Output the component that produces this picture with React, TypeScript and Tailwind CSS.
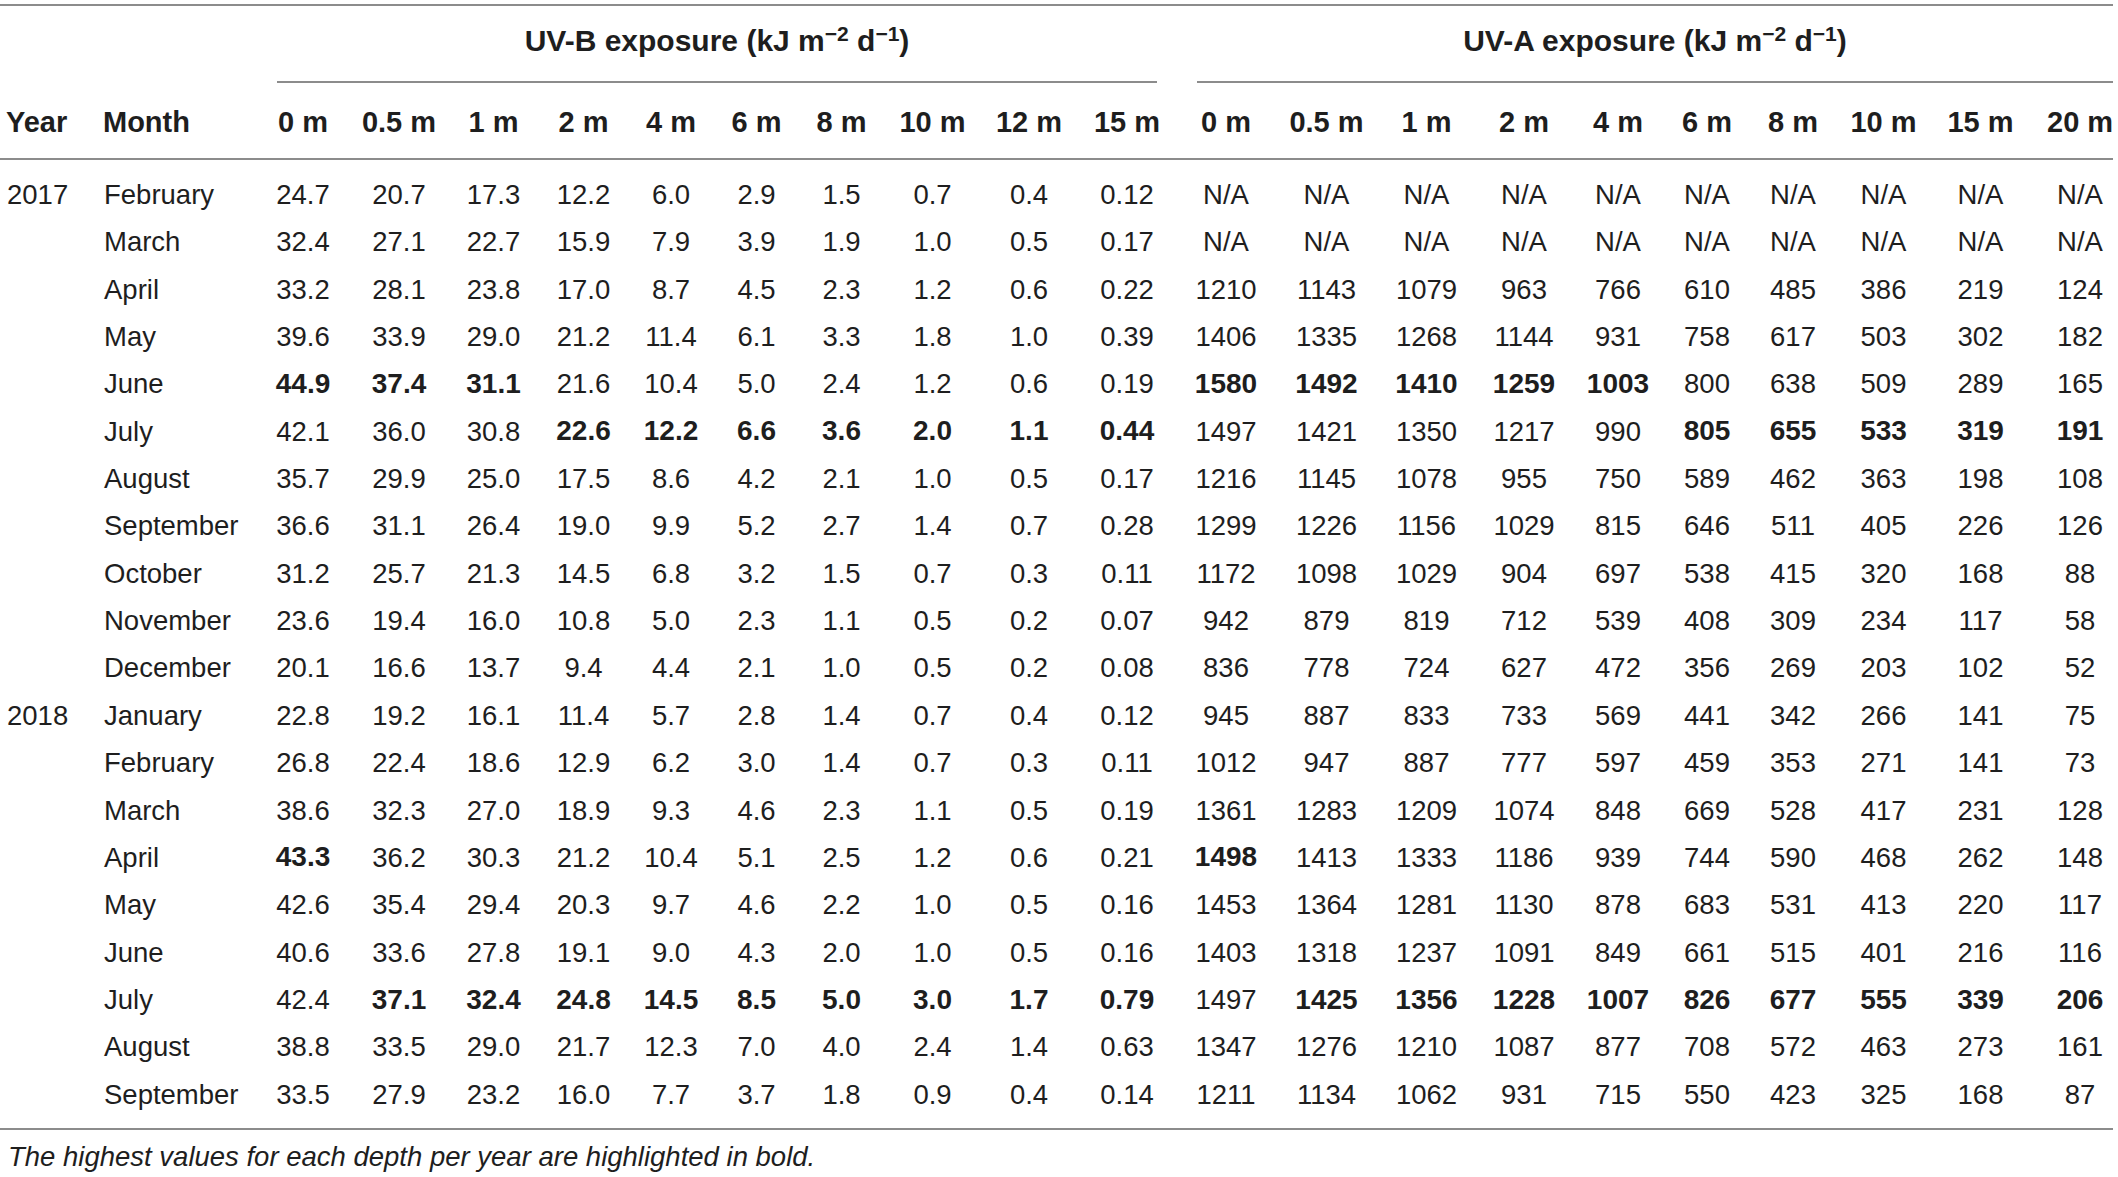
import React from "react";

const GRID =
  "grid grid-cols-[95px_160px_96px_96px_93px_87px_88px_83px_87px_95px_98px_98px_100px_101px_99px_96px_92px_86px_86px_95px_99px_83px]";

const depthsB = ["0 m", "0.5 m", "1 m", "2 m", "4 m", "6 m", "8 m", "10 m", "12 m", "15 m"];
const depthsA = ["0 m", "0.5 m", "1 m", "2 m", "4 m", "6 m", "8 m", "10 m", "15 m", "20 m"];

type Row = { year: string; month: string; v: string };

const rows: Row[] = [
  { year: "2017", month: "February", v: "24.7 20.7 17.3 12.2 6.0 2.9 1.5 0.7 0.4 0.12 N/A N/A N/A N/A N/A N/A N/A N/A N/A N/A" },
  { year: "", month: "March", v: "32.4 27.1 22.7 15.9 7.9 3.9 1.9 1.0 0.5 0.17 N/A N/A N/A N/A N/A N/A N/A N/A N/A N/A" },
  { year: "", month: "April", v: "33.2 28.1 23.8 17.0 8.7 4.5 2.3 1.2 0.6 0.22 1210 1143 1079 963 766 610 485 386 219 124" },
  { year: "", month: "May", v: "39.6 33.9 29.0 21.2 11.4 6.1 3.3 1.8 1.0 0.39 1406 1335 1268 1144 931 758 617 503 302 182" },
  { year: "", month: "June", v: "*44.9 *37.4 *31.1 21.6 10.4 5.0 2.4 1.2 0.6 0.19 *1580 *1492 *1410 *1259 *1003 800 638 509 289 165" },
  { year: "", month: "July", v: "42.1 36.0 30.8 *22.6 *12.2 *6.6 *3.6 *2.0 *1.1 *0.44 1497 1421 1350 1217 990 *805 *655 *533 *319 *191" },
  { year: "", month: "August", v: "35.7 29.9 25.0 17.5 8.6 4.2 2.1 1.0 0.5 0.17 1216 1145 1078 955 750 589 462 363 198 108" },
  { year: "", month: "September", v: "36.6 31.1 26.4 19.0 9.9 5.2 2.7 1.4 0.7 0.28 1299 1226 1156 1029 815 646 511 405 226 126" },
  { year: "", month: "October", v: "31.2 25.7 21.3 14.5 6.8 3.2 1.5 0.7 0.3 0.11 1172 1098 1029 904 697 538 415 320 168 88" },
  { year: "", month: "November", v: "23.6 19.4 16.0 10.8 5.0 2.3 1.1 0.5 0.2 0.07 942 879 819 712 539 408 309 234 117 58" },
  { year: "", month: "December", v: "20.1 16.6 13.7 9.4 4.4 2.1 1.0 0.5 0.2 0.08 836 778 724 627 472 356 269 203 102 52" },
  { year: "2018", month: "January", v: "22.8 19.2 16.1 11.4 5.7 2.8 1.4 0.7 0.4 0.12 945 887 833 733 569 441 342 266 141 75" },
  { year: "", month: "February", v: "26.8 22.4 18.6 12.9 6.2 3.0 1.4 0.7 0.3 0.11 1012 947 887 777 597 459 353 271 141 73" },
  { year: "", month: "March", v: "38.6 32.3 27.0 18.9 9.3 4.6 2.3 1.1 0.5 0.19 1361 1283 1209 1074 848 669 528 417 231 128" },
  { year: "", month: "April", v: "*43.3 36.2 30.3 21.2 10.4 5.1 2.5 1.2 0.6 0.21 *1498 1413 1333 1186 939 744 590 468 262 148" },
  { year: "", month: "May", v: "42.6 35.4 29.4 20.3 9.7 4.6 2.2 1.0 0.5 0.16 1453 1364 1281 1130 878 683 531 413 220 117" },
  { year: "", month: "June", v: "40.6 33.6 27.8 19.1 9.0 4.3 2.0 1.0 0.5 0.16 1403 1318 1237 1091 849 661 515 401 216 116" },
  { year: "", month: "July", v: "42.4 *37.1 *32.4 *24.8 *14.5 *8.5 *5.0 *3.0 *1.7 *0.79 1497 *1425 *1356 *1228 *1007 *826 *677 *555 *339 *206" },
  { year: "", month: "August", v: "38.8 33.5 29.0 21.7 12.3 7.0 4.0 2.4 1.4 0.63 1347 1276 1210 1087 877 708 572 463 273 161" },
  { year: "", month: "September", v: "33.5 27.9 23.2 16.0 7.7 3.7 1.8 0.9 0.4 0.14 1211 1134 1062 931 715 550 423 325 168 87" },
];

function Unit() {
  return (
    <>
      (kJ m<sup className="text-[21px]">−2</sup> d<sup className="text-[21px]">−1</sup>)
    </>
  );
}

export default function App() {
  return (
    <div className="w-[2118px] h-[1177px] overflow-hidden bg-white text-[#1e1e1e] font-['Liberation_Sans',Arial,sans-serif] text-[27.5px]">
      <div className="pt-[4px]">
        <div className="h-[2px] w-[2113px] bg-[#8c8c8c]" />

        {/* group headers */}
        <div className={`${GRID} h-[77px] font-bold text-[30px]`}>
          <div className="col-span-2" />
          <div className="col-span-10 ml-[22px] mr-[19px] border-b-2 border-[#8c8c8c] flex items-center justify-center pb-[6px] whitespace-nowrap">
            <span>
              UV-B exposure <Unit />
            </span>
          </div>
          <div className="col-span-10 ml-[21px] border-b-2 border-[#8c8c8c] flex items-center justify-center pb-[6px] whitespace-nowrap">
            <span>
              UV-A exposure <Unit />
            </span>
          </div>
        </div>

        {/* column headers */}
        <div className={`${GRID} h-[75px] pt-[5px] items-center font-bold text-[29px] whitespace-nowrap`}>
          <div className="pl-[6px]">Year</div>
          <div className="pl-[8px]">Month</div>
          {depthsB.map((d, i) => (
            <div key={"b" + i} className="text-center">
              {d}
            </div>
          ))}
          {depthsA.map((d, i) => (
            <div key={"a" + i} className={i === 9 ? "text-center pl-[17px]" : "text-center"}>
              {d}
            </div>
          ))}
        </div>

        <div className="h-[2px] w-[2113px] bg-[#8c8c8c]" />

        {/* body */}
        <div className="pt-[11px]">
          {rows.map((r, ri) => {
            const vals = r.v.split(" ");
            return (
              <div key={ri} className={`${GRID} h-[47.35px] items-center whitespace-nowrap`}>
                <div className="pl-[7px]">{r.year}</div>
                <div className="pl-[9px]">{r.month}</div>
                {vals.map((v, i) => {
                  const bold = v.startsWith("*");
                  const text = bold ? v.slice(1) : v;
                  return (
                    <div
                      key={i}
                      className={`text-center ${bold ? "font-bold text-[28px]" : ""} ${i === 19 ? "pl-[17px]" : ""}`}
                    >
                      {text}
                    </div>
                  );
                })}
              </div>
            );
          })}
        </div>

        <div className="mt-[10px] h-[2px] w-[2113px] bg-[#8c8c8c]" />

        <div className="mt-[13px] pl-[8px] italic leading-[28px] text-[27.5px]">
          The highest values for each depth per year are highlighted in bold.
        </div>
      </div>
    </div>
  );
}
